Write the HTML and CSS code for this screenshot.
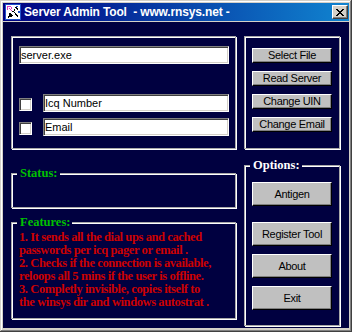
FILE: index.html
```html
<!DOCTYPE html>
<html lang="en">

<head>
  <meta charset="utf-8">
  <meta name="viewport" content="width=device-width, initial-scale=1">
  <title>Server Admin Tool</title>
  <link rel="stylesheet" href="styles.css">
</head>

<body>
  <div class="window">
    <div class="titlebar">
      <svg class="app-icon" width="16" height="16" viewBox="0 0 16 16" shape-rendering="crispEdges">
        <rect x="0" y="0" width="16" height="16" fill="#2050c8"/>
        <rect x="1" y="1" width="14" height="14" fill="#ffffff"/>
        <path d="M2 2h4v1H3v3H2z M6 3h1v2H6z" fill="#e040c0"/>
        <path d="M4 4h1v1h1v1h1v1H6V6H5V5H4z" fill="#e040c0"/>
        <path d="M7 7h2v1h1v1h1v1h1v1h1v2h-1v-1h-1v-1h-1V9H9V8H7z" fill="#000"/>
        <path d="M10 3h2v1h1v2h-1V5h-1V4h-1z M9 5h1v2H9z" fill="#000"/>
        <path d="M4 9h2v1h1v1h1v1H7v1H5v-1H4z M3 12h2v1h-1v1H3z" fill="#000"/>
        <path d="M11 2h2v1h-2z M13 7h2v2h-2z" fill="#2050c8"/>
      </svg>
      <span class="title">Server Admin Tool &nbsp;- www.rnsys.net -</span>
      <button class="close-btn" type="button">
        <svg width="8" height="7" viewBox="0 0 8 7" shape-rendering="crispEdges">
          <path d="M0 0h2v1h1v1h2V1h1V0h2v1H7v1H6v1H5v1h1v1h1v1h1v1H6V6H5V5H3v1H2v1H0V6h1V5h1V4h1V3H2V2H1V1H0z" fill="#000"/>
        </svg>
      </button>
    </div>

    <div class="client">
      <div class="col-left">
        <div class="frame frame-files">
          <input class="field field-wide" type="text" value="server.exe">
          <div class="check-row check-row-first">
            <input class="check" type="checkbox">
            <input class="field field-short" type="text" value="Icq Number">
          </div>
          <div class="check-row">
            <input class="check" type="checkbox">
            <input class="field field-short" type="text" value="Email">
          </div>
        </div>

        <fieldset class="frame group group-status">
          <legend class="legend-green">Status:</legend>
          <div class="status-body"></div>
        </fieldset>

        <fieldset class="frame group group-features">
          <legend class="legend-green">Features:</legend>
          <p class="features">
            1. It sends all the dial ups and cached<br>
            passwords per icq pager or email .<br>
            2. Checks if the connection is available,<br>
            reloops all 5 mins if the user is offline.<br>
            3. Completly invisible, copies itself to<br>
            the winsys dir and windows autostrat .
          </p>
        </fieldset>
      </div>

      <div class="col-right">
        <div class="frame frame-actions">
          <button class="btn" type="button">Select File</button>
          <button class="btn" type="button">Read Server</button>
          <button class="btn" type="button">Change UIN</button>
          <button class="btn" type="button">Change Email</button>
        </div>

        <fieldset class="frame group group-options">
          <legend class="legend-white">Options:</legend>
          <button class="btn btn-tall" type="button">Antigen</button>
          <button class="btn btn-tall btn-spaced" type="button">Register Tool</button>
          <button class="btn btn-tall" type="button">About</button>
          <button class="btn btn-tall" type="button">Exit</button>
        </fieldset>
      </div>
    </div>
  </div>
</body>

</html>
```

FILE: styles.css
```css
body {
  margin: 0;
  background: #d4d0c8;
  font-family: 'Liberation Sans', Arial, sans-serif;
}

.window {
  display: flex;
  flex-direction: column;
  box-sizing: border-box;
  width: 352px;
  height: 332px;
  padding: 3px 3px 4px 3px;
  background: #d4d0c8;
  box-shadow: inset -1px -1px #404040, inset 1px 1px #d4d0c8,
    inset -2px -2px #808080, inset 2px 2px #ffffff;
}

/* title bar */

.titlebar {
  display: flex;
  align-items: center;
  height: 18px;
  margin-bottom: 1px;
  padding-left: 2px;
  background: linear-gradient(to right, #000080, #1084d0);
}

.app-icon {
  flex: none;
}

.title {
  margin-left: 3px;
  color: #ffffff;
  font-size: 12px;
  font-weight: bold;
  letter-spacing: -0.15px;
  white-space: nowrap;
}

.close-btn {
  display: flex;
  align-items: center;
  justify-content: center;
  box-sizing: border-box;
  width: 16px;
  height: 14px;
  margin-left: auto;
  margin-right: 1px;
  padding: 0;
  background: #d4d0c8;
  border: 1px solid;
  border-color: #ffffff #404040 #404040 #ffffff;
  box-shadow: inset -1px -1px #808080;
}

/* client area */

.client {
  display: flex;
  gap: 8px;
  flex: 1;
  padding: 14px 9px 0 8px;
  background: #000040;
}

.col-left {
  display: flex;
  flex-direction: column;
  width: 225px;
}

.col-right {
  display: flex;
  flex-direction: column;
  width: 96px;
}

.frame {
  box-sizing: border-box;
  border: 1px solid #a8a8a8;
  box-shadow: inset 1px 1px #ffffff, 1px 1px #ffffff;
}

.frame-files {
  display: flex;
  flex-direction: column;
  height: 113px;
  padding: 9px 6px 0 7px;
}

.frame-actions {
  display: flex;
  flex-direction: column;
  gap: 8px;
  height: 113px;
  padding: 11px 7px 0 7px;
}

/* text fields and checks */

.field {
  box-sizing: border-box;
  height: 18px;
  margin: 0;
  padding: 0 1px;
  border: 1px solid;
  border-color: #808080 #ffffff #ffffff #808080;
  box-shadow: inset 1px 1px #404040, inset -1px -1px #d4d0c8;
  background: #ffffff;
  color: #000000;
  font-family: 'Liberation Sans', Arial, sans-serif;
  font-size: 11px;
  outline: none;
}

.field-wide {
  width: 210px;
}

.field-short {
  width: 186px;
}

.check-row {
  display: flex;
  align-items: flex-end;
  gap: 11px;
  margin-top: 6px;
}

.check-row-first {
  margin-top: 30px;
}

.check {
  appearance: none;
  box-sizing: border-box;
  width: 13px;
  height: 13px;
  margin: 0 0 1px 0;
  border: 1px solid;
  border-color: #808080 #ffffff #ffffff #808080;
  box-shadow: inset 1px 1px #404040, inset -1px -1px #d4d0c8;
  background: #ffffff;
}

/* group boxes */

.group {
  min-width: 0;
  margin: 0;
  padding: 0 7px;
}

.group legend {
  margin-left: -2px;
  padding: 0 2px 0 3px;
  background: #000040;
  font-family: 'Liberation Serif', 'Times New Roman', serif;
  font-size: 12.5px;
  font-weight: bold;
  line-height: 14px;
}

.legend-green {
  color: #00c000;
}

.legend-white {
  color: #ffffff;
}

.group-status {
  margin-top: 17px;
}

.status-body {
  height: 27px;
}

.group-features {
  margin-top: 7px;
}

.features {
  box-sizing: border-box;
  height: 89px;
  margin: 0;
  padding-top: 2px;
  color: #cc0000;
  font-family: 'Liberation Serif', 'Times New Roman', serif;
  font-size: 12.5px;
  font-weight: bold;
  letter-spacing: -0.4px;
  line-height: 13px;
  white-space: nowrap;
}

.group-options {
  display: flex;
  flex-direction: column;
  gap: 8px;
  margin-top: 9px;
  padding: 10px 7px 15px 7px;
}

/* buttons */

.btn {
  box-sizing: border-box;
  width: 80px;
  height: 15px;
  margin: 0;
  padding: 0;
  border: 1px solid;
  border-color: #ffffff #000000 #000000 #ffffff;
  box-shadow: inset -1px -1px #808080;
  background: #c0c0c0;
  color: #000000;
  font-family: 'Liberation Sans', Arial, sans-serif;
  font-size: 11px;
  letter-spacing: -0.3px;
  line-height: 13px;
  white-space: nowrap;
}

.btn-tall {
  height: 24px;
}

.btn-spaced {
  margin-top: 8px;
}
```
